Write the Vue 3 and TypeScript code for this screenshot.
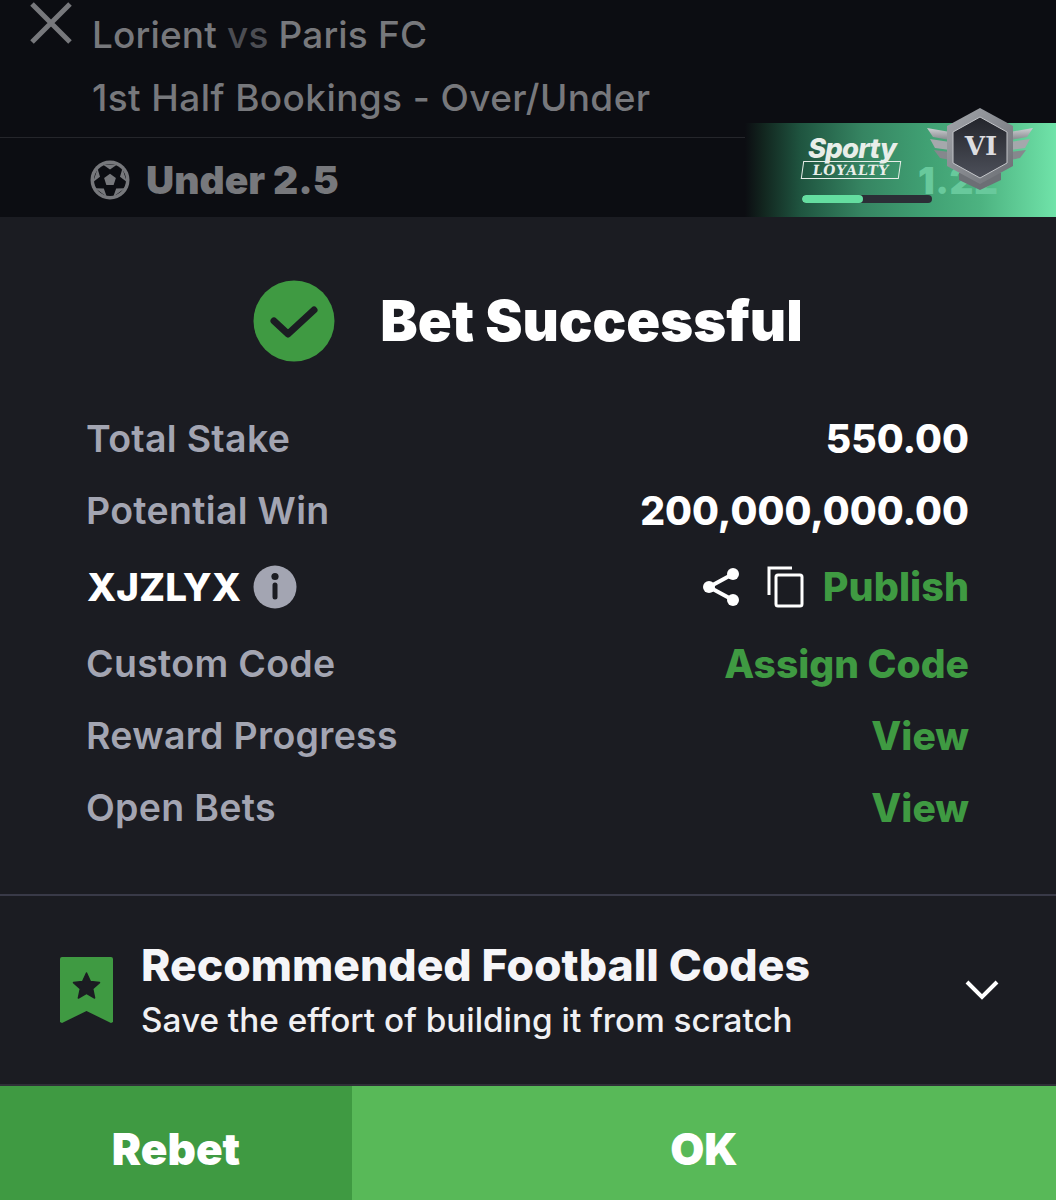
<script setup lang="ts">
interface Row { label: string; value: string; kind: 'plain' | 'link' }
const topRows: Row[] = [
  { label: 'Total Stake', value: '550.00', kind: 'plain' },
  { label: 'Potential Win', value: '200,000,000.00', kind: 'plain' },
]
const bottomRows: Row[] = [
  { label: 'Custom Code', value: 'Assign Code', kind: 'link' },
  { label: 'Reward Progress', value: 'View', kind: 'link' },
  { label: 'Open Bets', value: 'View', kind: 'link' },
]

const polar = (r: number, deg: number): string => {
  const a = (deg * Math.PI) / 180
  return `${(20 + r * Math.cos(a)).toFixed(2)} ${(20 + r * Math.sin(a)).toFixed(2)}`
}
const wedgeAngles = [-90, -18, 54, 126, 198]
const wedges = wedgeAngles
  .map((d) => `M${polar(17, d - 25)} L${polar(10.5, d)} L${polar(17, d + 25)}Z`)
  .join(' ')
const centre = wedgeAngles.map((d, i) => `${i ? 'L' : 'M'}${polar(6.2, d)}`).join(' ') + 'Z'
</script>

<template>
  <div class="page">
    <header class="top">
      <div class="match">
        <svg class="close" width="42" height="42" viewBox="0 0 42 42"><path d="M2 2 L40 40 M40 2 L2 40" stroke="#77787c" stroke-width="5" fill="none"/></svg>
        <div class="line one">Lorient <span class="vs">vs</span> Paris FC</div>
        <div class="line two">1st Half Bookings - Over/Under</div>
      </div>
      <div class="pick">
        <svg width="40" height="40" viewBox="0 0 40 40">
          <circle cx="20" cy="20" r="19.5" fill="#77787c"/>
          <circle cx="20" cy="20" r="16" fill="#0c0d12"/>
          <path :d="wedges" fill="#77787c"/>
          <path :d="centre" fill="#77787c"/>
        </svg>
        <span>Under 2.5</span>
      </div>
      <div class="loyalty">
        <span class="ghost">1.22</span>
        <div class="brand">
          <div class="sporty">Sporty</div>
          <div class="tag"><span>LOYALTY</span></div>
          <div class="bar"><div class="fill"></div></div>
        </div>
        <svg class="badge" width="110" height="84" viewBox="0 0 110 84">
          <defs>
            <linearGradient id="wing" x1="0" y1="0" x2="0" y2="1"><stop offset="0" stop-color="#cfd1d4"/><stop offset="1" stop-color="#85888d"/></linearGradient>
            <linearGradient id="hex" x1="0" y1="0" x2="0" y2="1"><stop offset="0" stop-color="#23252b"/><stop offset="1" stop-color="#4d505a"/></linearGradient>
            <linearGradient id="rim" x1="0" y1="0" x2="1" y2="1"><stop offset="0" stop-color="#a4a7ac"/><stop offset="1" stop-color="#6a6d73"/></linearGradient>
            <g id="feathers">
              <path d="M1 21 L24 25 V33 L7 30 Z" fill="url(#wing)"/>
              <path d="M4 32 L24 35 V43 L9 41 Z" fill="#a5a8ac"/>
              <path d="M8 43 L24 45 V53 L14 51 Z" fill="#85888d"/>
            </g>
          </defs>
          <use href="#feathers"/>
          <use href="#feathers" transform="translate(108 0) scale(-1 1)"/>
          <path d="M33 66 H75 V73 L54 83 L33 73Z" fill="#6c6f75"/>
          <path d="M54 1 L87 19 V59 L54 77 L21 59 V19Z" fill="url(#rim)"/>
          <path d="M54 10 L81 25 V56 L54 71 L27 56 V25Z" fill="url(#hex)" stroke="#c3c5c9" stroke-width="1"/>
          <text class="roman" x="55" y="48" text-anchor="middle">VI</text>
        </svg>
      </div>
    </header>

    <main class="sheet">
      <section class="result">
        <svg width="82" height="82" viewBox="0 0 82 82">
          <circle cx="41" cy="41" r="40.5" fill="#3f9a42"/>
          <path d="M21 41 L35 54 L61 30" fill="none" stroke="#1b1c22" stroke-width="7" stroke-linecap="round" stroke-linejoin="round"/>
        </svg>
        <h1>Bet Successful</h1>
      </section>

      <section class="rows">
        <div v-for="r in topRows" :key="r.label" class="row">
          <span class="label">{{ r.label }}</span>
          <span class="value">{{ r.value }}</span>
        </div>
        <div class="row code">
          <span class="code-left">
            <span class="value tight">XJZLYX</span>
            <svg width="44" height="44" viewBox="0 0 44 44">
              <circle cx="22" cy="22" r="21.5" fill="#a3a5b2"/>
              <circle cx="22" cy="11.5" r="3.6" fill="#1b1c22"/>
              <path d="M22 20 V32" stroke="#1b1c22" stroke-width="5" stroke-linecap="round"/>
            </svg>
          </span>
          <span class="code-right">
            <svg width="38" height="40" viewBox="0 0 38 40">
              <path d="M31 7 L7 20 L31 33" fill="none" stroke="#fff" stroke-width="4"/>
              <circle cx="31" cy="7" r="6" fill="#fff"/>
              <circle cx="7" cy="20" r="6" fill="#fff"/>
              <circle cx="31" cy="33" r="6" fill="#fff"/>
            </svg>
            <svg class="copy" width="37" height="42" viewBox="0 0 37 42">
              <path d="M2 29 V2 H25" fill="none" stroke="#fff" stroke-width="3"/>
              <rect x="9" y="9" width="26" height="31" rx="2" fill="none" stroke="#fff" stroke-width="3"/>
            </svg>
            <span class="link heavy">Publish</span>
          </span>
        </div>
        <div v-for="r in bottomRows" :key="r.label" class="row">
          <span class="label">{{ r.label }}</span>
          <span class="link">{{ r.value }}</span>
        </div>
      </section>

      <section class="recommend">
        <svg width="53" height="67" viewBox="0 0 53 67">
          <path d="M2 0 H51 A2 2 0 0 1 53 2 V65 L51 66 L26.5 54 L2 66 L0 65 V2 A2 2 0 0 1 2 0Z" fill="#3f9a42"/>
          <path d="M26.5 16 L30.4 24.6 L39.5 25.6 L32.7 31.8 L34.6 41 L26.5 36.3 L18.4 41 L20.3 31.8 L13.5 25.6 L22.6 24.6Z" fill="#1b1c22" stroke="#1b1c22" stroke-width="1.5" stroke-linejoin="round"/>
        </svg>
        <div class="rec-text">
          <div class="rec-title">Recommended Football Codes</div>
          <div class="rec-sub">Save the effort of building it from scratch</div>
        </div>
        <svg class="chev" width="36" height="22" viewBox="0 0 36 22"><path d="M3 3 L18 18 L33 3" fill="none" stroke="#fff" stroke-width="4"/></svg>
      </section>

      <footer class="actions">
        <button class="rebet">Rebet</button>
        <button class="ok">OK</button>
      </footer>
    </main>
  </div>
</template>

<style>
html, body { margin: 0; background: #1b1c22; }
</style>

<style scoped>
.page {
  width: 1056px;
  height: 1200px;
  display: flex;
  flex-direction: column;
  font-family: Inter, "Liberation Sans", sans-serif;
  overflow: hidden;
}
.top {
  position: relative;
  height: 217px;
  flex: none;
  background: #0c0d12;
  display: flex;
  flex-direction: column;
}
.match {
  height: 138px;
  box-sizing: border-box;
  padding: 14px 0 0 92px;
  border-bottom: 1px solid #25262b;
  flex: none;
}
.close { position: absolute; left: 30px; top: 2px; }
.line { font-size: 37px; font-weight: 500; color: #77787c; line-height: 42px; letter-spacing: 0.4px; }
.line.one { letter-spacing: 0.15px; }
.line.two { margin-top: 21px; }
.vs { color: #4c4d53; }
.pick {
  display: flex;
  align-items: center;
  gap: 16px;
  padding-left: 90px;
  height: 84px;
  padding-top: 4px;
  box-sizing: border-box;
  font-size: 39px;
  font-weight: 900;
  color: #77787c;
}
.loyalty {
  position: absolute;
  left: 745px;
  top: 123px;
  width: 311px;
  height: 94px;
  background: linear-gradient(90deg, #0c0d12 0%, #12261f 6%, #1f5540 18%, #368562 38%, #40a073 58%, #4db381 76%, #70e3a9 100%);
}
.ghost {
  position: absolute;
  left: 173px;
  top: 35px;
  font-size: 37px;
  font-weight: 900;
  letter-spacing: 0.5px;
  color: #68c99c;
}
.brand { position: absolute; left: 57px; top: 12px; width: 130px; }
.sporty {
  font-size: 27.5px;
  font-weight: 800;
  font-style: italic;
  color: #e8eee9;
  line-height: 26px;
  letter-spacing: -0.8px;
  text-align: center;
  width: 100px;
}
.tag {
  box-sizing: border-box;
  width: 98px;
  height: 18px;
  border: 1.5px solid #e8eee9;
  transform: skewX(-8deg);
  display: flex;
  align-items: center;
  justify-content: center;
  font-family: "DejaVu Serif", serif;
  font-size: 14px;
  font-weight: 700;
  letter-spacing: 0.8px;
  line-height: 1;
  color: #e8eee9;
}
.bar {
  margin-top: 16px;
  width: 130px;
  height: 8px;
  border-radius: 4px;
  background: #2b2e36;
  overflow: hidden;
}
.fill { width: 61px; height: 100%; border-radius: 4px; background: #64dea0; }
.badge { position: absolute; left: 181px; top: -16px; }
.roman {
  font-family: "DejaVu Serif", serif;
  font-size: 26px;
  font-weight: 700;
  fill: #dcdde0;
}
.sheet { flex: 1; display: flex; flex-direction: column; background: #1b1c22; min-height: 0; }
.result {
  height: 185px;
  flex: none;
  display: flex;
  align-items: center;
  justify-content: center;
  gap: 45px;
  padding: 23px 0 0;
  box-sizing: border-box;
}
.result h1 {
  margin: 0;
  font-size: 56px;
  font-weight: 900;
  color: #fff;
  line-height: 1;
}
.rows {
  height: 494px;
  flex: none;
  box-sizing: border-box;
  padding: 0 87px;
  display: flex;
  flex-direction: column;
  border-bottom: 2px solid #393a48;
}
.row {
  height: 72.3px;
  flex: none;
  display: flex;
  align-items: center;
  justify-content: space-between;
}
.row.code { height: 80.5px; }
.label { font-size: 37.5px; font-weight: 600; color: #a3a5b2; letter-spacing: 0.3px; margin-left: -1px; }
.value { font-size: 39px; font-weight: 800; color: #fff; }
.value.tight { font-size: 38.5px; }
.link { font-size: 39px; font-weight: 800; color: #3f9a42; }
.link.heavy { font-size: 39.5px; }
.code-left { display: flex; align-items: center; gap: 12px; }
.code-right { display: flex; align-items: center; }
.copy { margin-left: 27px; margin-right: 19px; }
.recommend {
  height: 190px;
  flex: none;
  box-sizing: border-box;
  padding: 0 56px 0 60px;
  display: flex;
  align-items: center;
  border-bottom: 2px solid #2f3038;
}
.rec-text { margin-left: 28px; flex: 1; }
.rec-title { font-size: 44.5px; font-weight: 800; color: #f5f5f8; line-height: 50px; }
.rec-sub { font-size: 33.3px; font-weight: 500; color: #f0f0f3; line-height: 40px; margin-top: 10px; }
.actions { flex: 1; display: flex; min-height: 0; }
.actions button {
  border: 0;
  padding: 12px 0 0;
  font-family: inherit;
  font-size: 44px;
  font-weight: 900;
  color: #fff;
}
.rebet { width: 352px; background: #3f9a42; }
.ok { flex: 1; background: #58b958; }
</style>
